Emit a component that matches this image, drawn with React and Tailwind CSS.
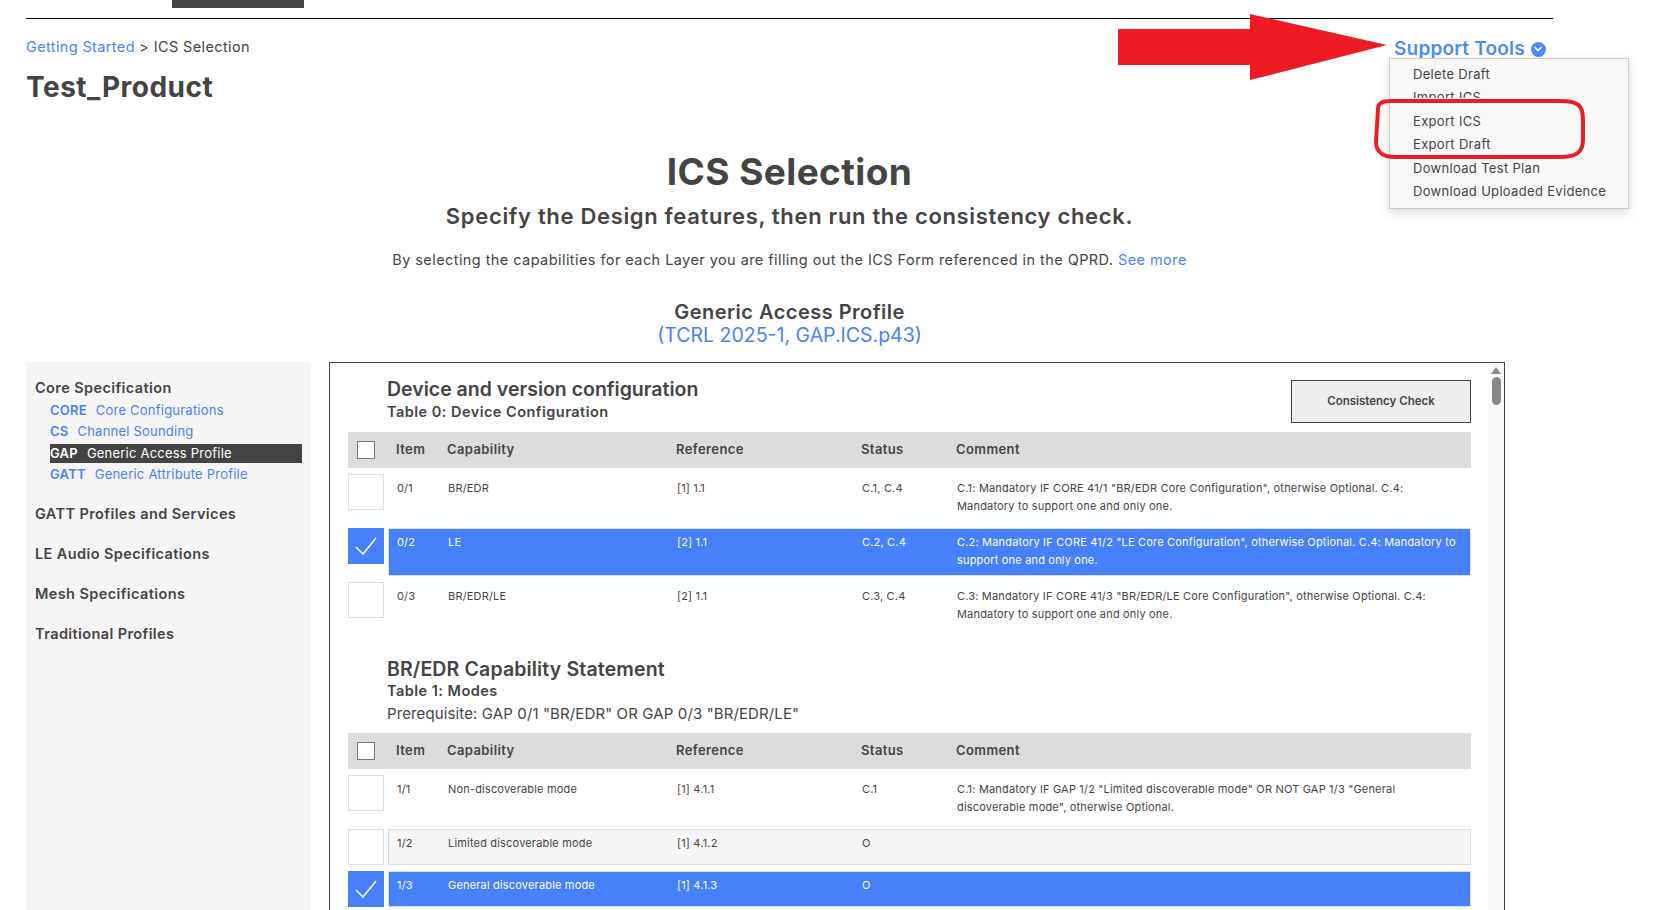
import { ChevronDown } from 'lucide-react'

const coreItems = [
  { code: 'CORE', name: 'Core Configurations' },
  { code: 'CS', name: 'Channel Sounding' },
  { code: 'GAP', name: 'Generic Access Profile', active: true },
  { code: 'GATT', name: 'Generic Attribute Profile' },
]

const otherGroups = ['GATT Profiles and Services', 'LE Audio Specifications', 'Mesh Specifications', 'Traditional Profiles']

const menuItems = ['Delete Draft', 'Import ICS', 'Export ICS', 'Export Draft', 'Download Test Plan', 'Download Uploaded Evidence']

const deviceRows = [
  {
    item: '0/1',
    capability: 'BR/EDR',
    reference: '[1] 1.1',
    status: 'C.1, C.4',
    comment: 'C.1: Mandatory IF CORE 41/1 "BR/EDR Core Configuration", otherwise Optional. C.4: Mandatory to support one and only one.',
  },
  {
    item: '0/2',
    capability: 'LE',
    reference: '[2] 1.1',
    status: 'C.2, C.4',
    comment: 'C.2: Mandatory IF CORE 41/2 "LE Core Configuration", otherwise Optional. C.4: Mandatory to support one and only one.',
    selected: true,
  },
  {
    item: '0/3',
    capability: 'BR/EDR/LE',
    reference: '[2] 1.1',
    status: 'C.3, C.4',
    comment: 'C.3: Mandatory IF CORE 41/3 "BR/EDR/LE Core Configuration", otherwise Optional. C.4: Mandatory to support one and only one.',
  },
]

const modeRows = [
  {
    item: '1/1',
    capability: 'Non-discoverable mode',
    reference: '[1] 4.1.1',
    status: 'C.1',
    comment: 'C.1: Mandatory IF GAP 1/2 "Limited discoverable mode" OR NOT GAP 1/3 "General discoverable mode", otherwise Optional.',
  },
  { item: '1/2', capability: 'Limited discoverable mode', reference: '[1] 4.1.2', status: 'O', comment: '', short: true, shaded: true },
  { item: '1/3', capability: 'General discoverable mode', reference: '[1] 4.1.3', status: 'O', comment: '', short: true, selected: true },
]

const TableHeader = () => (
  <div className="flex h-[36px] items-center bg-[#dcdcdc] text-[13px] font-semibold tracking-[0.4px] text-[#444]">
    <div className="flex w-[36px] justify-center">
      <div className="h-[18px] w-[18px] border border-[#777] bg-white" />
    </div>
    <div className="grid flex-1 grid-cols-[51px_229px_185px_95px_1fr] pl-[12px]">
      <span>Item</span>
      <span>Capability</span>
      <span>Reference</span>
      <span>Status</span>
      <span>Comment</span>
    </div>
  </div>
)

const TableRow = ({ row }) => {
  const height = row.short ? 'h-[36px]' : 'h-[48px]'
  let rowColor = 'border-white bg-white text-[#444]'
  if (row.selected) rowColor = 'border-[#dde3ee] bg-[#4680fb] text-white'
  if (row.shaded) rowColor = 'border-[#ddd] bg-[#f5f5f5] text-[#444]'

  return (
    <div className="mt-[6px] flex gap-[4px]">
      {row.selected ? (
        <div className="flex h-[36px] w-[36px] items-center justify-center bg-[#4680fb]">
          <svg width="22" height="18" viewBox="0 0 22 18" fill="none" stroke="white" strokeWidth="1.5">
            <path d="M1 10 L8 17 L21 1" />
          </svg>
        </div>
      ) : (
        <div className="h-[36px] w-[36px] border border-[#ddd] bg-white" />
      )}
      <div className={`grid flex-1 grid-cols-[51px_229px_185px_95px_1fr] border pl-[8px] pr-[14px] pt-[4px] text-[11px] leading-[18px] tracking-[0.18px] ${height} ${rowColor}`}>
        <span>{row.item}</span>
        <span>{row.capability}</span>
        <span>{row.reference}</span>
        <span>{row.status}</span>
        <span>{row.comment}</span>
      </div>
    </div>
  )
}

const Sidebar = () => (
  <aside className="h-[560px] w-[285px] shrink-0 bg-[#f5f5f5] pl-[9px] pr-[9px] pt-[16px] text-[#444]">
    <h3 className="text-[14.5px] font-semibold leading-[20px] tracking-[0.4px]">Core Specification</h3>
    <ul className="ml-[15px] mt-[1.5px]">
      {coreItems.map((item) => (
        <li
          key={item.code}
          className={`flex h-[21.5px] items-center text-[13px] tracking-[0.22px] ${item.active ? 'bg-[linear-gradient(transparent_1px,#444_1px,#444_20px,transparent_20px)] text-white' : 'text-[#4a80fa]'}`}
        >
          <span className="mr-[9px] font-semibold">{item.code}</span>
          <span>{item.name}</span>
        </li>
      ))}
    </ul>
    <div className="mt-[18.5px] flex flex-col gap-[20px]">
      {otherGroups.map((group) => (
        <h3 key={group} className="text-[14.5px] font-semibold leading-[20px] tracking-[0.4px]">{group}</h3>
      ))}
    </div>
  </aside>
)

const Annotation = () => (
  <svg className="absolute left-[1110px] top-[8px]" width="490" height="160" viewBox="0 0 490 160" fill="none">
    <path d="M8 21 H140 V6 L277 37 L140 72 V57 H8 Z" fill="#ed1c24" />
    <path d="M268 101 C268 94 274 93 282 93 H450 C468 93 473 97 473 112 V132 C473 145 465 149 450 149 H285 C273 149 266 144 266 134 Z" stroke="#ed1c24" strokeWidth="4" />
  </svg>
)

const App = () => {
  return (
    <div className="relative h-[910px] overflow-hidden bg-white font-['Inter',sans-serif] text-[#444]">
      <div className="px-[26px]">
        <div className="h-[19px] w-[1527px] border-b border-black">
          <div className="ml-[146px] h-[8px] w-[132px] bg-[#444]" />
        </div>

        <div className="mt-[18px] text-[14.5px] leading-[20px] tracking-[0.37px]">
          <a className="text-[#4a80fa]">Getting Started</a> &gt; ICS Selection
        </div>
        <h1 className="mt-[12px] text-[28px] font-bold leading-[36px] tracking-[0.5px]">Test_Product</h1>

        <section className="w-[1527px] text-center">
          <h2 className="mt-[45px] text-[37px] font-bold leading-[44px] tracking-[0.4px]">ICS Selection</h2>
          <p className="mt-[7px] text-[22px] font-semibold leading-[30px] tracking-[0.67px]">Specify the Design features, then run the consistency check.</p>
          <p className="mt-[18px] text-[14.5px] leading-[22px] tracking-[0.43px]">
            By selecting the capabilities for each Layer you are filling out the ICS Form referenced in the QPRD. <a className="text-[#4a80fa]">See more</a>
          </p>
          <h3 className="mt-[29px] text-[20px] font-semibold leading-[24px] tracking-[0.48px]">Generic Access Profile</h3>
          <a className="block text-[19.5px] leading-[23px] text-[#4a80fa]">(TCRL 2025-1, GAP.ICS.p43)</a>
        </section>

        <div className="mt-[15px] flex">
          <Sidebar />
          <main className="ml-[18px] flex h-[560px] w-[1176px] border border-[#444]">
            <div className="flex-1 pl-[18px] pr-[17px]">
              <div className="flex h-[69px] justify-between pl-[39px] pt-[14px]">
                <div>
                  <h2 className="text-[19.5px] font-semibold leading-[24px]">Device and version configuration</h2>
                  <h4 className="mt-[1px] text-[14.5px] font-semibold leading-[20px] tracking-[0.47px]">Table 0: Device Configuration</h4>
                </div>
                <button className="mt-[3px] h-[43px] w-[180px] border border-[#444] bg-[#eee] text-[11.5px] font-semibold">Consistency Check</button>
              </div>
              <TableHeader />
              {deviceRows.map((row) => <TableRow key={row.item} row={row} />)}

              <div className="mt-[27px] pl-[39px]">
                <h2 className="text-[19.5px] font-semibold leading-[24px] tracking-[0.15px]">BR/EDR Capability Statement</h2>
                <h4 className="text-[14.5px] font-semibold leading-[20px] tracking-[0.47px]">Table 1: Modes</h4>
                <p className="mt-[2px] text-[15px] leading-[22px] tracking-[0.12px]">Prerequisite: GAP 0/1 "BR/EDR" OR GAP 0/3 "BR/EDR/LE"</p>
              </div>
              <div className="mt-[8px]">
                <TableHeader />
              </div>
              {modeRows.map((row) => <TableRow key={row.item} row={row} />)}
            </div>
            <div className="flex w-[16px] flex-col items-center bg-[#fafafa] pt-[4px]">
              <div className="h-0 w-0 border-x-[5px] border-b-[7px] border-x-transparent border-b-[#888]" />
              <div className="mt-[3px] h-[28px] w-[9px] rounded-full bg-[#888]" />
            </div>
          </main>
        </div>
      </div>

      <div className="absolute left-[1394px] top-[37px] flex items-center gap-[6px] text-[#4a8cf7]">
        <span className="text-[19px] font-semibold leading-[24px] tracking-[0.2px]">Support Tools</span>
        <span className="flex h-[15px] w-[15px] items-center justify-center rounded-full bg-[#4a8cf7]">
          <ChevronDown className="h-[12px] w-[12px] text-white" strokeWidth={3.5} />
        </span>
      </div>

      <div className="absolute left-[1389px] top-[58px] h-[151px] w-[240px] border border-[#ccc] bg-[#f8f8f8] pl-[23px] pt-[3.5px] text-[13px] tracking-[0.32px] shadow-[0_4px_10px_rgba(0,0,0,0.15)]">
        {menuItems.map((label) => (
          <div key={label} className="h-[23.5px] leading-[22px]">
            {label === 'Import ICS' ? <div className="h-[12px] overflow-hidden">{label}</div> : label}
          </div>
        ))}
      </div>

      <Annotation />
    </div>
  )
}

export default App
